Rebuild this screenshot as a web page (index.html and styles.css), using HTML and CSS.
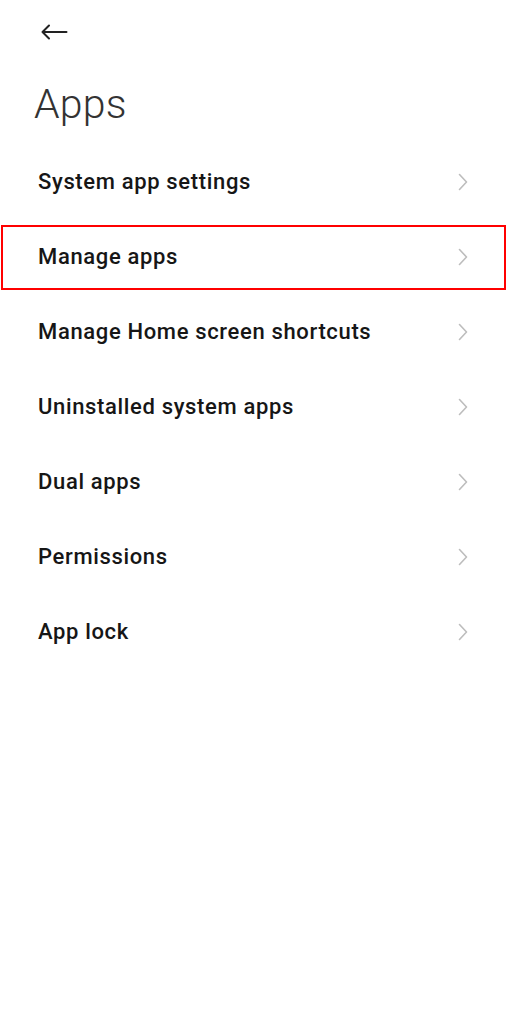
FILE: index.html
```html
<!DOCTYPE html>
<html lang="en">
<head>
<meta charset="utf-8">
<title>Apps</title>
<link rel="stylesheet" href="styles.css">
</head>
<body>
<div class="screen">
  <header class="topbar">
    <button class="back" aria-label="Back">
      <svg width="28" height="16" viewBox="0 0 28 16"><path d="M26.5 8H2.5M9 1.5L2.5 8L9 14.5" fill="none" stroke="#222" stroke-width="2" stroke-linecap="round" stroke-linejoin="round"/></svg>
    </button>
  </header>
  <h1 class="title">Apps</h1>
  <ul class="menu">
    <li class="row"><span class="label">System app settings</span><svg class="chev" width="10" height="18" viewBox="0 0 10 18"><path d="M1.5 1.5L8.5 9L1.5 16.5" fill="none" stroke="#bdbdbd" stroke-width="1.6" stroke-linecap="round" stroke-linejoin="round"/></svg></li>
    <li class="row highlighted"><span class="label">Manage apps</span><svg class="chev" width="10" height="18" viewBox="0 0 10 18"><path d="M1.5 1.5L8.5 9L1.5 16.5" fill="none" stroke="#bdbdbd" stroke-width="1.6" stroke-linecap="round" stroke-linejoin="round"/></svg></li>
    <li class="row"><span class="label">Manage Home screen shortcuts</span><svg class="chev" width="10" height="18" viewBox="0 0 10 18"><path d="M1.5 1.5L8.5 9L1.5 16.5" fill="none" stroke="#bdbdbd" stroke-width="1.6" stroke-linecap="round" stroke-linejoin="round"/></svg></li>
    <li class="row"><span class="label">Uninstalled system apps</span><svg class="chev" width="10" height="18" viewBox="0 0 10 18"><path d="M1.5 1.5L8.5 9L1.5 16.5" fill="none" stroke="#bdbdbd" stroke-width="1.6" stroke-linecap="round" stroke-linejoin="round"/></svg></li>
    <li class="row"><span class="label">Dual apps</span><svg class="chev" width="10" height="18" viewBox="0 0 10 18"><path d="M1.5 1.5L8.5 9L1.5 16.5" fill="none" stroke="#bdbdbd" stroke-width="1.6" stroke-linecap="round" stroke-linejoin="round"/></svg></li>
    <li class="row"><span class="label">Permissions</span><svg class="chev" width="10" height="18" viewBox="0 0 10 18"><path d="M1.5 1.5L8.5 9L1.5 16.5" fill="none" stroke="#bdbdbd" stroke-width="1.6" stroke-linecap="round" stroke-linejoin="round"/></svg></li>
    <li class="row"><span class="label">App lock</span><svg class="chev" width="10" height="18" viewBox="0 0 10 18"><path d="M1.5 1.5L8.5 9L1.5 16.5" fill="none" stroke="#bdbdbd" stroke-width="1.6" stroke-linecap="round" stroke-linejoin="round"/></svg></li>
  </ul>
</div>
</body>
</html>
```

FILE: styles.css
```css
html, body {
  margin: 0;
  padding: 0;
  background: #ffffff;
}
body {
  font-family: Roboto, "Liberation Sans", sans-serif;
  color: #111;
}
.screen {
  width: 507px;
  min-height: 1024px;
  display: flex;
  flex-direction: column;
}
.topbar {
  height: 64px;
  display: flex;
  align-items: center;
  padding-left: 40px;
}
.back {
  border: 0;
  background: none;
  padding: 0;
  margin-top: 0;
  display: flex;
  width: 28px;
  height: 16px;
}
.title {
  margin: 15px 0 0 34px;
  font-weight: 300;
  font-size: 41px;
  line-height: 50px;
  color: #333;
  letter-spacing: 0.2px;
}
.menu {
  list-style: none;
  margin: 15px 0 0 0;
  padding: 0;
}
.row {
  position: relative;
  height: 75px;
  display: flex;
  align-items: center;
  justify-content: space-between;
  padding: 0 39px 0 38px;
}
.label {
  font-size: 22px;
  font-weight: 500;
  letter-spacing: 0.65px;
  color: #161616;
}
.chev {
  display: block;
}
.highlighted::after {
  content: "";
  position: absolute;
  left: 1px;
  right: 1px;
  top: 6px;
  bottom: 4px;
  border: 2px solid #f00;
  pointer-events: none;
}
```
